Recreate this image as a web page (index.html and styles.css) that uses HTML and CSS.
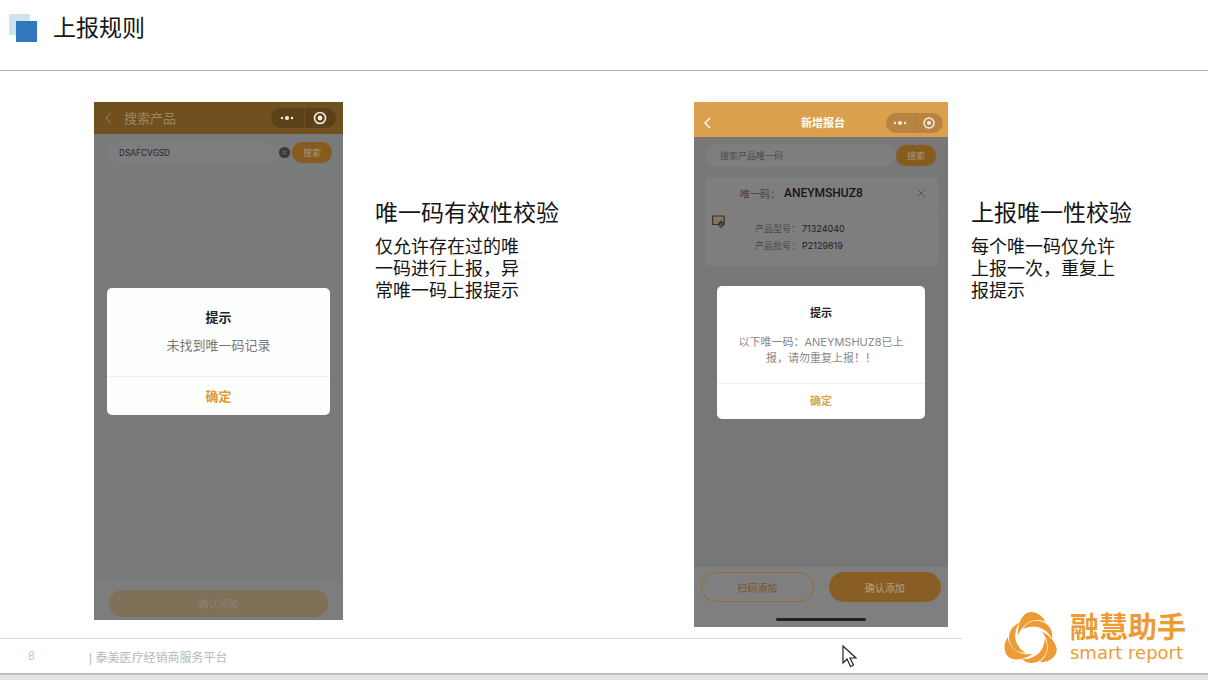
FILE: index.html
```html
<!DOCTYPE html>
<html lang="zh-CN">
<head>
<meta charset="utf-8">
<meta name="viewport" content="width=device-width, initial-scale=1">
<title>上报规则</title>
<link rel="stylesheet" href="styles.css">
</head>
<body>
<div class="slide">
  <header class="slide-header">
    <svg class="mark" width="28" height="28" viewBox="0 0 28 28" aria-hidden="true"><path fill="#cfe2f0" d="M0 0h21v21H0z"/><path fill="#3077bd" d="M7 7h21v21H7z"/></svg>
    <h1 class="slide-title">上报规则</h1>
  </header>

  <main class="rules">
    <section class="rule rule-valid">
      <div class="phone phone-search">
        <div class="nav">
          <button class="back" type="button" aria-label="返回"><svg width="8" height="12" viewBox="0 0 8 12"><path d="M7 1 2 6l5 5" fill="none" stroke="currentColor"/></svg></button>
          <span class="nav-title">搜索产品</span>
          <div class="capsule">
            <button type="button" aria-label="更多"><svg width="16" height="14" viewBox="0 0 16 14" fill="currentColor"><circle cx="3" cy="7" r="1.2"/><circle cx="8" cy="7" r="2.1"/><circle cx="13" cy="7" r="1.2"/></svg></button>
            <button type="button" aria-label="关闭"><svg width="14" height="14" viewBox="0 0 14 14"><circle cx="7" cy="7" r="5.5" fill="none" stroke="currentColor" stroke-width="1.6"/><circle cx="7" cy="7" r="2.4" fill="currentColor"/></svg></button>
          </div>
        </div>
        <form class="search">
          <input class="search-input" type="text" value="DSAFCVGSD" aria-label="搜索产品">
          <button class="clear" type="button" aria-label="清除"><svg width="11" height="11" viewBox="0 0 11 11"><circle cx="5.500" cy="5.500" r="5.500" fill="#39393b"/><path d="m3.500 3.500 4 4m0-4-4 4" stroke="#77787a"/></svg></button>
          <button class="search-button" type="button">搜索</button>
        </form>
        <div class="dock"><button class="pill pill-faded" type="button">确认添加</button></div>
        <div class="dialog" role="dialog" aria-labelledby="tip-a">
          <h3 class="dialog-title" id="tip-a">提示</h3>
          <p class="dialog-text">未找到唯一码记录</p>
          <button class="dialog-ok" type="button">确定</button>
        </div>
      </div>
      <div class="note">
        <h2 class="note-title">唯一码有效性校验</h2>
        <p class="note-text">仅允许存在过的唯一码进行上报，异常唯一码上报提示</p>
      </div>
    </section>

    <section class="rule rule-unique">
      <div class="phone phone-add">
        <div class="nav">
          <button class="back" type="button" aria-label="返回"><svg width="8" height="12" viewBox="0 0 8 12"><path d="M7 1 2 6l5 5" fill="none" stroke="currentColor" stroke-width="1.4"/></svg></button>
          <span class="nav-title">新增报台</span>
          <div class="capsule">
            <button type="button" aria-label="更多"><svg width="16" height="14" viewBox="0 0 16 14" fill="currentColor"><circle cx="3" cy="7" r="1.2"/><circle cx="8" cy="7" r="2"/><circle cx="13" cy="7" r="1.2"/></svg></button>
            <button type="button" aria-label="关闭"><svg width="14" height="14" viewBox="0 0 14 14"><circle cx="7" cy="7" r="5" fill="none" stroke="currentColor" stroke-width="1.5"/><circle cx="7" cy="7" r="2" fill="currentColor"/></svg></button>
          </div>
        </div>
        <form class="search">
          <input class="search-input" type="text" placeholder="搜索产品唯一码" aria-label="搜索产品唯一码">
          <button class="search-button" type="button">搜索</button>
        </form>
        <article class="card">
          <div class="card-head">
            <span class="card-label">唯一码：</span><strong class="card-code">ANEYMSHUZ8</strong>
            <button class="card-close" type="button" aria-label="删除"><svg width="8" height="8" viewBox="0 0 8 8"><path d="m.5.5 7 7m0-7-7 7" stroke="#555"/></svg></button>
          </div>
          <div class="card-body">
            <svg class="card-icon" width="13" height="13" viewBox="0 0 13 13" fill="none"><path d="M.6 1h11.600v8.500H.6z" fill="#7d7565" stroke="#39342e" stroke-width="1.2"/><path d="M2.500 3.500h2m1 0h4M2.500 7h3" stroke="#a07a45"/><path d="M7 7.500h4v3L9 12.500l-2-2z" fill="#5a5349" stroke="#292724"/><path d="M9 5v3" stroke="#292724"/></svg>
            <dl class="facts">
              <div><dt>产品型号：</dt><dd>71324040</dd></div>
              <div><dt>产品批号：</dt><dd>P2129819</dd></div>
            </dl>
          </div>
        </article>
        <div class="dock">
          <button class="pill pill-outline" type="button">扫码添加</button>
          <button class="pill pill-solid" type="button">确认添加</button>
          <span class="home-bar"></span>
        </div>
        <div class="dialog" role="dialog" aria-labelledby="tip-b">
          <h3 class="dialog-title" id="tip-b">提示</h3>
          <p class="dialog-text">以下唯一码：ANEYMSHUZ8已上报，请勿重复上报！！</p>
          <button class="dialog-ok" type="button">确定</button>
        </div>
      </div>
      <div class="note">
        <h2 class="note-title">上报唯一性校验</h2>
        <p class="note-text">每个唯一码仅允许上报一次，重复上报提示</p>
      </div>
    </section>
  </main>

  <footer class="slide-footer">
    <div class="footer-info"><span class="page-number">8</span><span>| 泰美医疗经销商服务平台</span></div>
    <div class="brand">
      <svg class="brand-mark" width="54" height="54" viewBox="-81 -88 162 162" aria-hidden="true">
        <defs><g id="arm"><path d="M-39-15C-41-52-24-85 0-85C19-85 37-71 43-55C14-69-20-58-39-15Z"/><path d="M-25-33C-9-61 22-65 43-51C60-39 66-23 63-4C48-36 12-53-25-33Z"/></g></defs>
        <g fill="#ed9b35"><use href="#arm"/><use href="#arm" transform="rotate(120)"/><use href="#arm" transform="rotate(240)"/></g>
      </svg>
      <div class="brand-name"><span class="brand-cn">融慧助手</span><span class="brand-en">smart report</span></div>
    </div>
  </footer>
  <div class="slide-edge"></div>
  <svg class="cursor" width="15" height="23" viewBox="0 0 15 23" aria-hidden="true"><path d="M1 1v17l4-4 3.500 7.500 3-1.500L8 13h6z" fill="#fff" stroke="#20202a" stroke-width="1.2"/></svg>
</div>
</body>
</html>
```
FILE: styles.css
```css
* { box-sizing: border-box; }

body {
  margin: 0;
  background: #fff;
  color: #151515;
  font-family: "Liberation Sans", "Noto Sans CJK SC", sans-serif;
}

h1, h2, h3, p, dl, dd { margin: 0; }

button {
  padding: 0;
  border: 0;
  background: none;
  color: inherit;
  font-family: inherit;
}

svg { display: block; }

.slide {
  position: relative;
  display: flex;
  flex-direction: column;
  min-height: 100vh;
}

.slide-header {
  display: flex;
  align-items: center;
  gap: 16px;
  height: 71px;
  padding: 0 9px 14px;
  border-bottom: 1px solid #b5b5b5;
}

.slide-title, .note-title {
  font-size: 23px;
  font-weight: 400;
  line-height: 28px;
}

.rules {
  flex: 1;
  display: grid;
  grid-template-columns: 600fr 514fr;
  padding: 31px 0 11px 94px;
}

.rule { display: grid; align-items: start; }
.rule-valid { grid-template-columns: 249fr 351fr; }
.rule-unique { grid-template-columns: 254fr 260fr; }

.note { padding: 97px 0 0 32px; }
.rule-unique .note { padding-left: 23px; }

.note-text {
  width: 8em;
  margin-top: 9px;
  font-size: 18px;
  line-height: 22px;
}

.phone {
  position: relative;
  display: flex;
  flex-direction: column;
  background: #797a7b;
  font-family: Inter, "Noto Sans CJK SC", sans-serif;
}

.phone-search { aspect-ratio: 249 / 518; }
.phone-add { aspect-ratio: 254 / 525; background: #777; }

.nav {
  display: flex;
  align-items: center;
  height: 32px;
  padding: 0 7px 0 10px;
  background: #71501f;
  color: #9f8560;
}

.nav-title { flex: 1; margin-left: 12px; font-size: 13px; line-height: 18px; }

.phone-add .nav {
  display: grid;
  grid-template-columns: 1fr auto 1fr;
  height: 35px;
  padding: 6px 5px 0 9px;
  background: #dba04e;
  color: #fff;
}

.phone-add .nav-title { margin: 0; font-size: 11px; font-weight: 700; }

.capsule {
  display: grid;
  grid-template-columns: 1fr 1fr;
  width: 65px;
  height: 20px;
  border-radius: 10px;
  background: #5c4018;
  color: #f5eee2;
}

.capsule button { display: grid; place-items: center; }
.capsule button + button { border-left: 1px solid #6b4e25; }

.phone-add .capsule {
  justify-self: end;
  width: 57px;
  background: #b78441;
}

.phone-add .capsule button + button { border-color: #b07d3c; }

.search {
  display: flex;
  align-items: center;
  margin: 8px 11px 0 13px;
}

.phone-add .search { margin: 7px 12px 0 11px; }

.search-input {
  flex: 1;
  min-width: 0;
  height: 20px;
  padding: 0 12px;
  border: 0;
  border-radius: 10px;
  background: #7d7d7f;
  color: #29292b;
  font-family: Roboto, sans-serif;
  font-size: 9px;
}

.phone-add .search-input {
  height: 23px;
  padding: 0 15px;
  border-radius: 12px;
  background: #7e7e7e;
  font-family: "Noto Sans CJK SC", sans-serif;
}

.search-input::placeholder { color: #4b4b4b; opacity: 1; }

.clear { margin-right: 2px; }

.search-button {
  width: 40px;
  height: 21px;
  border-radius: 11px;
  background: #875a1d;
  color: #b0977a;
  font-size: 9px;
}

.card {
  margin: 10px 10px 0 11px;
  border-radius: 5px;
  background: #7e7e7e;
}

.card-head {
  display: flex;
  align-items: center;
  height: 33px;
  margin-left: 24px;
  padding: 0 13px 0 11px;
  border-bottom: 1px solid #797979;
}

.card-label { color: #444; font-size: 10px; }
.card-code { flex: 1; margin-left: 4px; color: #161616; font-family: Roboto, sans-serif; font-size: 12px; font-weight: 500; }

.card-body {
  display: flex;
  align-items: flex-start;
  padding: 5px 7px 12px;
}

.facts {
  margin: 5px 0 0 20px;
  padding-left: 8px;
  border-left: 2px solid #857c6b;
  font-size: 9px;
  line-height: 17px;
}

.facts div { display: flex; gap: 2px; }
.facts dt { color: #4a4a4a; }
.facts dd { color: #1c1c1c; }

.dock {
  margin-top: auto;
  padding: 7px 15px 3px;
  background: #7d7d7e;
}

.phone-add .dock {
  display: grid;
  grid-template-columns: 1fr 1fr;
  gap: 16px 15px;
  padding: 5px 7px 6px;
  background: #7f7f7f;
}

.pill {
  width: 100%;
  height: 27px;
  border-radius: 15px;
  font-size: 10px;
}

.phone-add .pill { height: 30px; }
.pill-faded { background: #7f7058; color: #8b8274; }
.pill-outline { border: 1px solid #936a31; color: #7c5420; }
.pill-solid { background: #895e25; color: #b7a080; }

.home-bar {
  grid-column: 1 / -1;
  justify-self: center;
  width: 90px;
  height: 3px;
  border-radius: 2px;
  background: #202020;
}

.dialog {
  position: absolute;
  top: 36%;
  left: 13px;
  right: 13px;
  padding-top: 19px;
  border-radius: 5px;
  background: #fdfefe;
  text-align: center;
}

.phone-add .dialog { top: 35%; left: 23px; right: 23px; background: #fff; }

.dialog-title { color: #222; font-size: 13px; line-height: 20px; }
.dialog-text { margin: 8px 20px 21px; color: #777; font-size: 13px; line-height: 20px; }

.dialog-ok {
  width: 100%;
  height: 39px;
  padding-bottom: 2px;
  border-top: 1px solid #efefef;
  color: #e39a2e;
  font-size: 13px;
  font-weight: 700;
}

.phone-add .dialog-title { margin-top: -2px; font-size: 11px; }
.phone-add .dialog-text { margin: 11px 20px 17px; color: #888; font-size: 11px; line-height: 16px; }
.phone-add .dialog-ok { height: 36px; color: #d9a64c; font-size: 11px; }

.slide-footer {
  display: flex;
  align-items: flex-end;
  gap: 42px;
  margin-top: -27px;
  padding-right: 22px;
}

.footer-info {
  flex: 1;
  display: flex;
  align-items: center;
  height: 35px;
  padding-left: 28px;
  border-top: 1px solid #d9d9d9;
  color: #b8b8b8;
  font-size: 12px;
}

.page-number { width: 61px; color: #b8c9df; }

.brand {
  display: flex;
  align-items: center;
  gap: 12px;
  height: 62px;
  padding-bottom: 8px;
  color: #ed9b35;
}

.brand-name { display: flex; flex-direction: column; white-space: nowrap; }
.brand-cn { font-size: 29px; font-weight: 700; line-height: 30px; }
.brand-en { font-family: "DejaVu Sans", sans-serif; font-size: 18px; line-height: 20px; }

.slide-edge {
  height: 7px;
  border-top: 2px solid #bdbdbd;
  background: #e5e5e5;
}

.cursor { position: absolute; left: 842px; top: 645px; }
```
